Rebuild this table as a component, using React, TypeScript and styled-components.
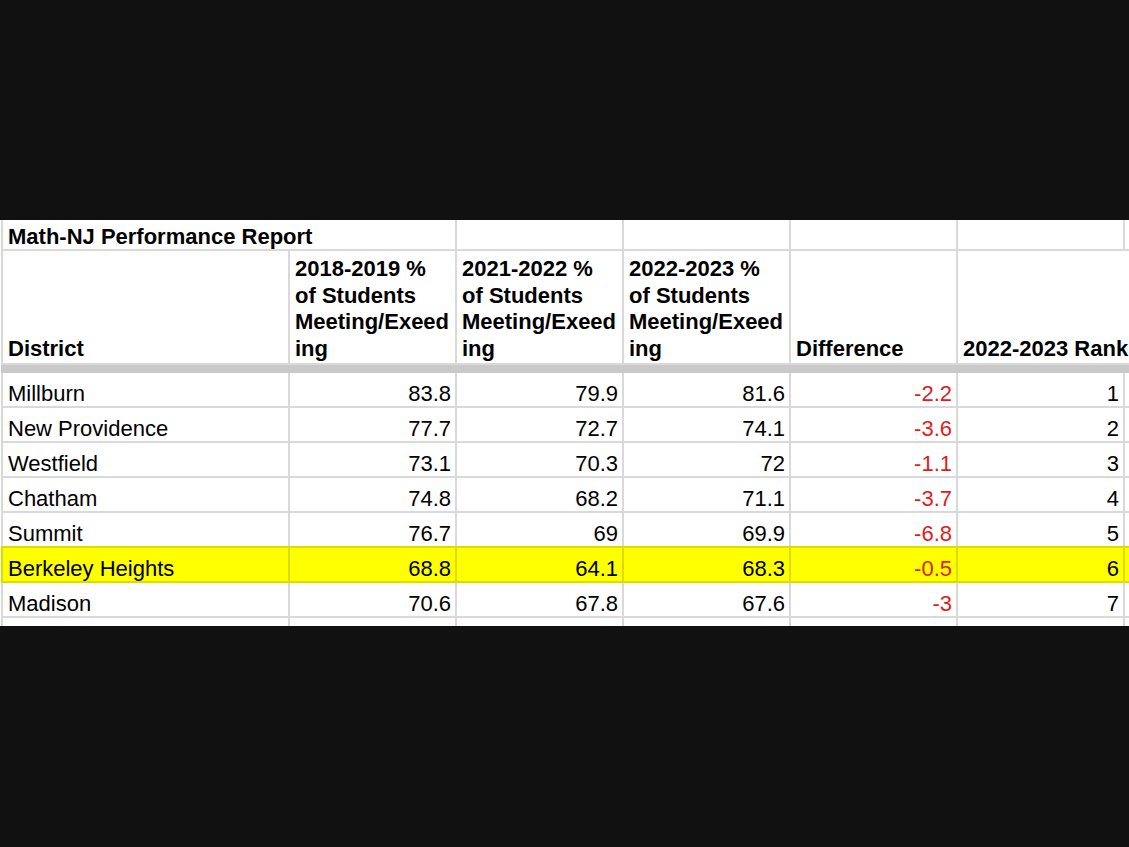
import React from "react";
import styled, { createGlobalStyle, css } from "styled-components";

const GRID = "#d9d9d9";
const HL_GRID = "#dcdc00";

const Global = createGlobalStyle`
  html, body {
    margin: 0;
    padding: 0;
    background: #111111;
  }
  body {
    font-family: "Liberation Sans", Arial, sans-serif;
    width: 1129px;
    height: 847px;
    overflow: hidden;
  }
`;

const Page = styled.div`
  padding-top: 220px;
  height: 847px;
  box-sizing: border-box;
`;

const Sheet = styled.div`
  width: 1129px;
  height: 406px;
  overflow: hidden;
  background: #ffffff;
  padding-left: 1px;
  box-sizing: border-box;
  display: flex;
  flex-direction: column;
  color: #000000;
`;

type RowTone = "plain" | "highlight";

const Row = styled.div<{ $height: number; $tone?: RowTone; $edge?: string }>`
  display: grid;
  grid-template-columns: 287px 167px 167px 167px 167px 167px 1fr;
  height: ${(p) => p.$height}px;
  flex: none;
  box-sizing: border-box;
  border-bottom: 2px solid ${(p) => p.$edge ?? (p.$tone === "highlight" ? HL_GRID : GRID)};
  background: ${(p) => (p.$tone === "highlight" ? "#ffff00" : "transparent")};
`;

const FrozenBand = styled.div`
  height: 8px;
  flex: none;
  background: #c9c9c9;
`;

const Cell = styled.div<{
  $align?: "left" | "right";
  $bold?: boolean;
  $red?: boolean;
  $span?: number;
  $noLine?: boolean;
  $lineColor?: string;
  $lh?: number;
  $pb?: number;
}>`
  box-sizing: border-box;
  border-left: 2px solid ${(p) => (p.$noLine ? "transparent" : p.$lineColor ?? GRID)};
  display: flex;
  flex-direction: column;
  justify-content: flex-end;
  align-items: ${(p) => (p.$align === "right" ? "flex-end" : "flex-start")};
  padding: 0 4px ${(p) => p.$pb ?? 0}px 5px;
  font-size: 22px;
  line-height: ${(p) => p.$lh ?? 25}px;
  font-weight: ${(p) => (p.$bold ? 700 : 400)};
  color: ${(p) => (p.$red ? "#e31b1b" : "#000000")};
  white-space: nowrap;
  min-width: 0;
  ${(p) =>
    p.$span &&
    css`
      grid-column: span ${p.$span};
    `}
`;

const HeadLine = styled.span`
  display: block;
`;

type DataRow = {
  district: string;
  y2019: string;
  y2022: string;
  y2023: string;
  diff: string;
  rank: string;
  highlight?: boolean;
};

const rows: DataRow[] = [
  { district: "Millburn", y2019: "83.8", y2022: "79.9", y2023: "81.6", diff: "-2.2", rank: "1" },
  { district: "New Providence", y2019: "77.7", y2022: "72.7", y2023: "74.1", diff: "-3.6", rank: "2" },
  { district: "Westfield", y2019: "73.1", y2022: "70.3", y2023: "72", diff: "-1.1", rank: "3" },
  { district: "Chatham", y2019: "74.8", y2022: "68.2", y2023: "71.1", diff: "-3.7", rank: "4" },
  { district: "Summit", y2019: "76.7", y2022: "69", y2023: "69.9", diff: "-6.8", rank: "5" },
  {
    district: "Berkeley Heights",
    y2019: "68.8",
    y2022: "64.1",
    y2023: "68.3",
    diff: "-0.5",
    rank: "6",
    highlight: true,
  },
  { district: "Madison", y2019: "70.6", y2022: "67.8", y2023: "67.6", diff: "-3", rank: "7" },
];

const yearHeads = ["2018-2019 %", "2021-2022 %", "2022-2023 %"];

export default function App() {
  return (
    <Page>
      <Global />
      <Sheet>
        <Row $height={31}>
          <Cell $bold $span={2} $pb={0}>
            Math-NJ Performance Report
          </Cell>
          <Cell />
          <Cell />
          <Cell />
          <Cell />
          <Cell />
        </Row>
        <Row $height={114}>
          <Cell $bold $lh={26.4} $pb={1}>
            District
          </Cell>
          {yearHeads.map((h) => (
            <Cell key={h} $bold $lh={26.4} $pb={1}>
              <HeadLine>{h}</HeadLine>
              <HeadLine>of Students</HeadLine>
              <HeadLine>Meeting/Exeed</HeadLine>
              <HeadLine>ing</HeadLine>
            </Cell>
          ))}
          <Cell $bold $lh={26.4} $pb={1}>
            Difference
          </Cell>
          <Cell $bold $lh={26.4} $pb={1}>
            2022-2023 Rank
          </Cell>
          <Cell $noLine />
        </Row>
        <FrozenBand />
        {rows.map((r, i) => {
          const tone: RowTone = r.highlight ? "highlight" : "plain";
          const next = rows[i + 1];
          const edge = next?.highlight ? HL_GRID : undefined;
          const lc = r.highlight ? HL_GRID : undefined;
          return (
            <Row key={r.district} $height={35} $tone={tone} $edge={edge}>
              <Cell $lineColor={lc}>{r.district}</Cell>
              <Cell $align="right" $lineColor={lc}>
                {r.y2019}
              </Cell>
              <Cell $align="right" $lineColor={lc}>
                {r.y2022}
              </Cell>
              <Cell $align="right" $lineColor={lc}>
                {r.y2023}
              </Cell>
              <Cell $align="right" $red $lineColor={lc}>
                {r.diff}
              </Cell>
              <Cell $align="right" $lineColor={lc}>
                {r.rank}
              </Cell>
              <Cell $lineColor={lc} />
            </Row>
          );
        })}
        <Row $height={35}>
          <Cell />
          <Cell />
          <Cell />
          <Cell />
          <Cell />
          <Cell />
          <Cell />
        </Row>
      </Sheet>
    </Page>
  );
}
